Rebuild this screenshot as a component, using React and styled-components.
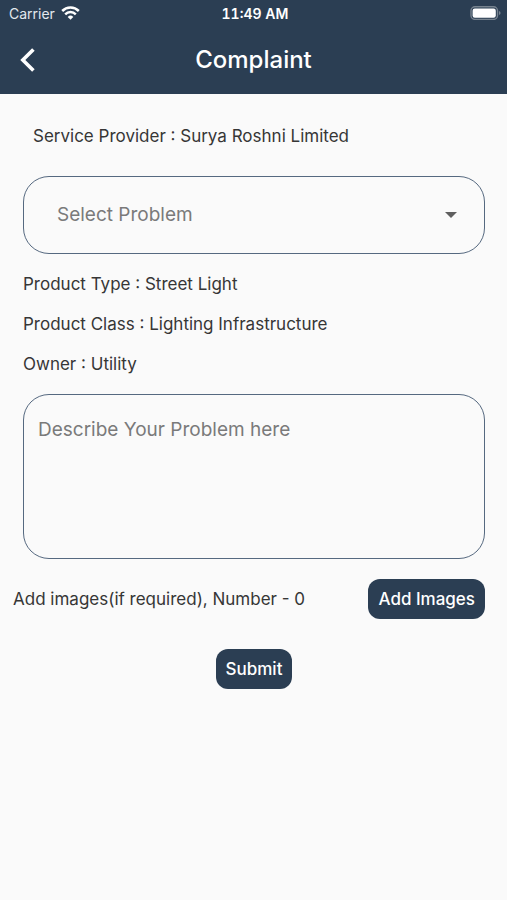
import React from "react";
import styled, { createGlobalStyle } from "styled-components";

const navy = "#2b3e53";
const outline = "#566980";
const fontStack = 'Inter, "Liberation Sans", sans-serif';

const GlobalStyle = createGlobalStyle`
  *, *::before, *::after { box-sizing: border-box; }
  body {
    margin: 0;
    background: #fafafa;
    color: #363636;
    font-family: ${fontStack};
  }
`;

const Screen = styled.div`
  min-height: 100vh;
  display: flex;
  flex-direction: column;
`;

const Header = styled.header`
  background: ${navy};
  color: #fff;
`;

const StatusBar = styled.div`
  display: grid;
  grid-template-columns: 1fr auto 1fr;
  align-items: center;
  height: 26px;
  padding: 0 6px 0 9px;
  font-size: 14px;
`;

const Carrier = styled.span`
  display: flex;
  align-items: center;
  gap: 6px;
  color: #e3e8ee;
`;

const Clock = styled.span`
  font-weight: 600;
  font-variant-numeric: tabular-nums;
`;

const Battery = styled.svg`
  justify-self: end;
`;

const TitleBar = styled.div`
  display: grid;
  grid-template-columns: 32px 1fr 32px;
  align-items: center;
  height: 68px;
  padding: 0 12px;
`;

const BackButton = styled.button`
  display: flex;
  justify-content: center;
  padding: 4px 0;
  border: 0;
  background: none;
  color: inherit;
`;

const Title = styled.h1`
  margin: 0;
  text-align: center;
  font-size: 24px;
  line-height: 32px;
  font-weight: 500;
`;

const Form = styled.form`
  display: flex;
  flex-direction: column;
  padding: 30px 22px 0 23px;
`;

const Provider = styled.p`
  margin: 0 0 28px;
  padding: 0 10px;
  font-size: 17px;
  line-height: 24px;
`;

const SelectBox = styled.div`
  display: grid;
  align-items: center;
`;

const Select = styled.select`
  grid-area: 1 / 1;
  appearance: none;
  width: 100%;
  height: 78px;
  padding: 0 60px 2px 33px;
  border: 1px solid ${outline};
  border-radius: 26px;
  background: transparent;
  color: #7a7a7a;
  font: 19px ${fontStack};
`;

const Arrow = styled.svg`
  grid-area: 1 / 1;
  justify-self: end;
  margin-right: 28px;
  pointer-events: none;
`;

const Details = styled.div`
  display: grid;
  gap: 16px;
  padding: 18px 0;
  font-size: 17px;
  line-height: 24px;
`;

const Detail = styled.p`
  margin: 0;
`;

const Description = styled.textarea`
  display: block;
  width: 100%;
  height: 165px;
  padding: 23px 14px;
  border: 1px solid ${outline};
  border-radius: 26px;
  resize: none;
  background: transparent;
  color: #363636;
  font: 19px/24px ${fontStack};
  &::placeholder { color: #7a7a7a; opacity: 1; }
`;

const ImagesRow = styled.div`
  display: flex;
  align-items: center;
  justify-content: space-between;
  margin: 20px 0 30px -10px;
  font-size: 17px;
`;

const Button = styled.button`
  height: 40px;
  padding: 0 10px;
  border: 0;
  border-radius: 12px;
  background: ${navy};
  color: #fff;
  font: 500 17px ${fontStack};
  align-self: center;
`;

export default function App() {
  return (
    <Screen>
      <GlobalStyle />
      <Header>
        <StatusBar>
          <Carrier>
            Carrier
            <svg width="19" height="14" viewBox="0 0 19 14" fill="none" stroke="#fff" strokeWidth="2.5" aria-hidden="true">
              <path d="M1.2 5a11.7 11.7 0 0 1 16.6 0M4.2 8.3a7.5 7.5 0 0 1 10.6 0" />
              <path d="M9.5 13.8 6.7 10.9a4 4 0 0 1 5.6 0z" fill="#fff" stroke="none" />
            </svg>
          </Carrier>
          <Clock>11:49 AM</Clock>
          <Battery width="31" height="14" viewBox="0 0 31 14" role="img" aria-label="Battery full">
            <rect x="1" y=".8" width="26.5" height="12.6" rx="4" fill="none" stroke="#77838f" strokeWidth="1.4" />
            <rect x="2.6" y="2.5" width="23.2" height="9.2" rx="2.2" fill="#fff" />
            <path d="M29 5q1.6.6 1.6 2T29 9z" fill="#77838f" />
          </Battery>
        </StatusBar>
        <TitleBar>
          <BackButton type="button" aria-label="Back">
            <svg width="16" height="26" viewBox="0 0 16 26" fill="none" stroke="currentColor" strokeWidth="3.6" aria-hidden="true">
              <path d="M13.4 2.4 2.8 13l10.6 10.6" />
            </svg>
          </BackButton>
          <Title>Complaint</Title>
        </TitleBar>
      </Header>
      <Form onSubmit={(e) => e.preventDefault()}>
        <Provider>Service Provider : Surya Roshni Limited</Provider>
        <SelectBox>
          <Select aria-label="Select Problem" defaultValue="">
            <option value="">Select Problem</option>
          </Select>
          <Arrow width="12" height="6" viewBox="0 0 12 6" aria-hidden="true">
            <path d="M0 0h12L6 6z" fill="#5f5f5f" />
          </Arrow>
        </SelectBox>
        <Details>
          <Detail>Product Type : Street Light</Detail>
          <Detail>Product Class : Lighting Infrastructure</Detail>
          <Detail>Owner : Utility</Detail>
        </Details>
        <Description aria-label="Problem description" placeholder="Describe Your Problem here" />
        <ImagesRow>
          <span>Add images(if required), Number - 0</span>
          <Button type="button">Add Images</Button>
        </ImagesRow>
        <Button type="submit">Submit</Button>
      </Form>
    </Screen>
  );
}
